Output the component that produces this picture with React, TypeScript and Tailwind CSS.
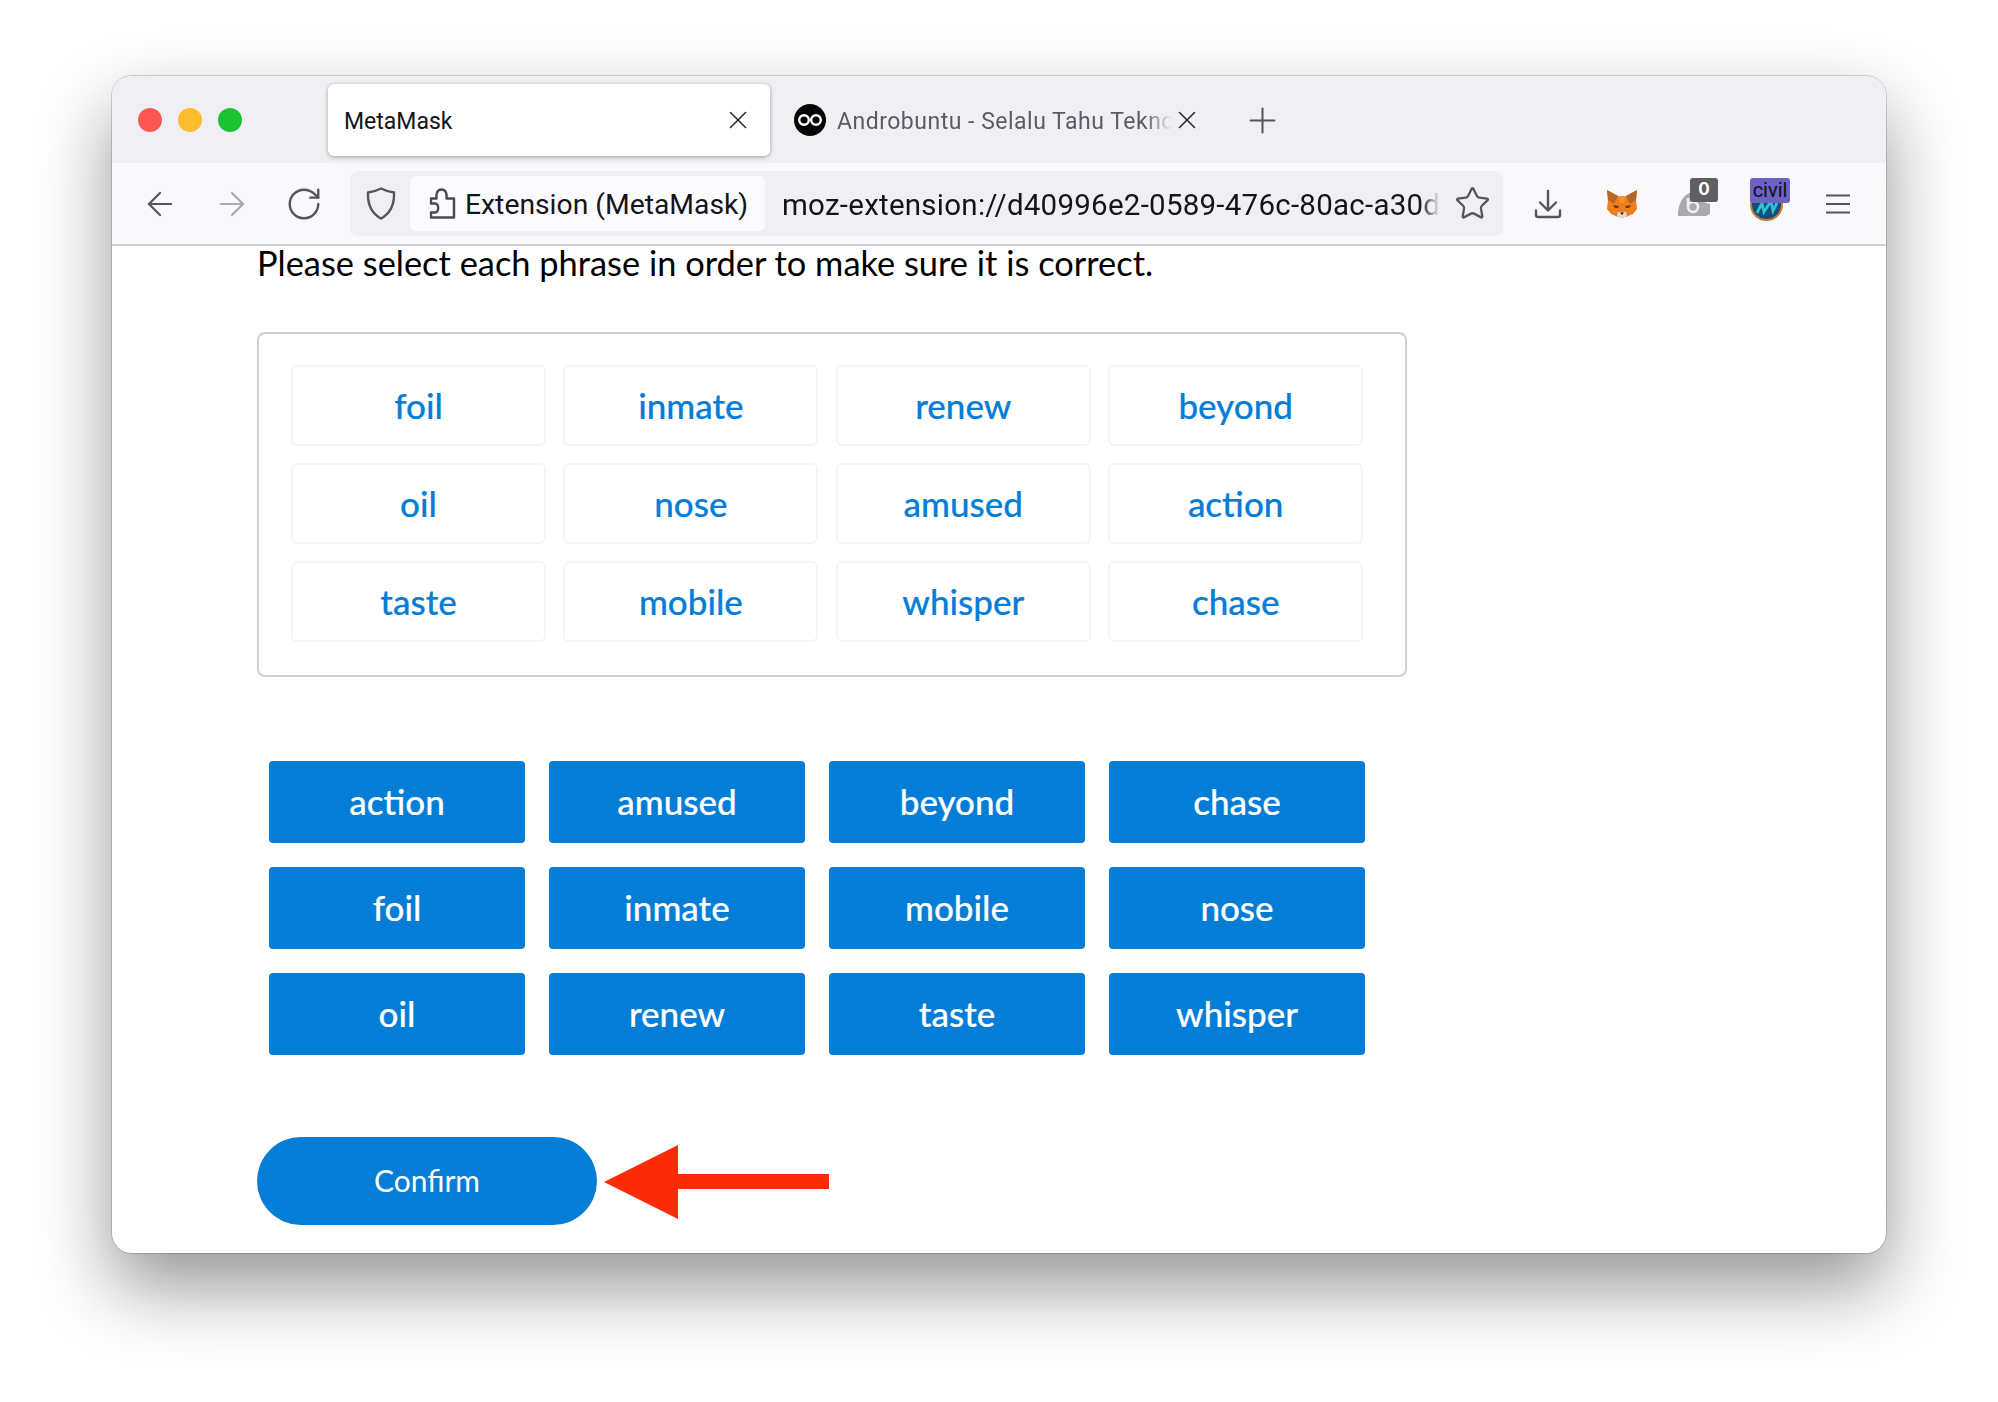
import React from 'react';
import { ArrowLeft, ArrowRight, RotateCw, Star, X, Plus } from 'lucide-react';

const chips = ['foil', 'inmate', 'renew', 'beyond', 'oil', 'nose', 'amused', 'action', 'taste', 'mobile', 'whisper', 'chase'];
const words = ['action', 'amused', 'beyond', 'chase', 'foil', 'inmate', 'mobile', 'nose', 'oil', 'renew', 'taste', 'whisper'];

const PuzzleIcon = () => (
  <svg width="27" height="31" viewBox="0 0 27 31" fill="none" stroke="#4a4a50" strokeWidth="2.4" strokeLinejoin="round">
    <path d="M2 10.500H7.500C7 6 8 1.500 12.500 1.500C17 1.500 18 6 17.500 10.500H25V29.500H2V24.500H6C10 24.500 10.500 15.500 6 15.500H2Z" />
  </svg>
);

const ShieldIcon = () => (
  <svg width="30" height="33" viewBox="0 0 30 33" fill="none" stroke="#55555b" strokeWidth="2.4" strokeLinejoin="round">
    <path d="M15 1.500C19 3.500 23.500 5 28 5.500C28.500 17 25 26 15 31.500C5 26 1.500 17 2 5.500C6.500 5 11 3.500 15 1.500Z" />
  </svg>
);

const FoxIcon = () => (
  <svg width="32" height="30" viewBox="0 0 32 30">
    <polygon points="1,1 12,7 20,7 31,1 30,11 31,20 27,25 20,28 12,28 5,25 1,20 2,11" fill="#ee7f1f" />
    <polygon points="1,1 12,7 8,15 2,11" fill="#b5672a" />
    <polygon points="31,1 20,7 24,15 30,11" fill="#b5672a" />
    <polygon points="12,7 20,7 18,14 14,14" fill="#f6913a" />
    <polygon points="12,23 20,23 21,27 16,30 11,27" fill="#e4d8cc" />
    <polygon points="14,23.500 18,23.500 16,26" fill="#241a12" />
    <polygon points="7,16 13,17 12,19 9,19" fill="#6b3a12" />
    <polygon points="25,16 19,17 20,19 23,19" fill="#6b3a12" />
  </svg>
);

const OwlFavicon = () => (
  <svg width="32" height="32" viewBox="0 0 32 32">
    <circle cx="16" cy="16" r="16" fill="#050505" />
    <circle cx="10" cy="16" r="4.800" fill="none" stroke="#fff" strokeWidth="2.400" />
    <circle cx="22" cy="16" r="4.800" fill="none" stroke="#fff" strokeWidth="2.400" />
  </svg>
);

const DownloadIcon = () => (
  <svg width="28" height="30" viewBox="0 0 28 30" fill="none" stroke="#55555b" strokeWidth="2.400" strokeLinecap="round" strokeLinejoin="round">
    <path d="M14 2v19M6 13.500l8 8 8-8M2 21.500v4.500c0 1.200.8 2 2 2h20c1.200 0 2-.8 2-2v-4.500" />
  </svg>
);

const GreyExtIcon = () => (
  <svg width="32" height="24" viewBox="0 0 32 24">
    <path d="M0 24C0 12 5 1 16 0C18 6 24 10 32 12V22L28 24Z" fill="#a9a9ae" />
    <circle cx="15" cy="15" r="5" fill="none" stroke="#f2f2f4" strokeWidth="2.500" />
    <path d="M10 15V6" stroke="#f2f2f4" strokeWidth="2.500" />
  </svg>
);

const CivilIcon = () => (
  <svg width="33" height="33" viewBox="0 0 33 33">
    <circle cx="16.500" cy="16.500" r="15.500" fill="#11507a" stroke="#c9793a" strokeWidth="2" />
    <path d="M7 25L12 15L14 24L21 13L23 23L27 15" fill="none" stroke="#2cc3d6" strokeWidth="2.800" />
  </svg>
);

const MenuIcon = () => (
  <svg width="24" height="20" viewBox="0 0 24 20" fill="none" stroke="#55555b" strokeWidth="2.200">
    <path d="M0 1.500H24M0 10H24M0 18.500H24" />
  </svg>
);

const App = () => {
  return (
    <div className="min-h-[1402px] bg-white pl-[112px] pt-[76px]" style={{ fontFamily: 'Inter, sans-serif' }}>
      <div className="w-[1774px] h-[1177px] rounded-[20px] bg-white overflow-hidden shadow-[0_34px_75px_rgba(0,0,0,0.42),0_0_0_1px_rgba(0,0,0,0.16)]">
        {/* Tab strip */}
        <div className="h-[87px] bg-[#f0f0f4] flex items-start pt-2">
          <div className="w-[216px] flex items-center gap-[16px] pl-[26px] h-[72px]">
            <span className="w-6 h-6 rounded-full bg-[#fc5753]" />
            <span className="w-6 h-6 rounded-full bg-[#fdbc2e]" />
            <span className="w-6 h-6 rounded-full bg-[#19c332]" />
          </div>
          <div className="w-[442px] h-[72px] bg-white rounded-[6px] shadow-[0_1px_4px_rgba(0,0,0,0.35)] flex items-center justify-between pl-[16px] pr-[17px]">
            <span className="text-[23px] text-[#15141a] font-['Roboto'] mt-[5px]">MetaMask</span>
            <X size={30} strokeWidth={1.3} className="text-[#2b2a33]" />
          </div>
          <div className="h-[72px] flex items-center pl-[24px]">
            <OwlFavicon />
            <span className="ml-[11px] w-[335px] overflow-hidden whitespace-nowrap text-[23px] tracking-[0.5px] text-[#5b5b66] font-['Roboto'] mt-[5px] [mask-image:linear-gradient(to_right,black_92%,transparent)]">Androbuntu - Selalu Tahu Tekno</span>
            <X size={30} strokeWidth={1.3} className="text-[#2b2a33]" />
            <Plus size={41} strokeWidth={1.2} className="ml-[40px] text-[#55555b]" />
          </div>
        </div>

        {/* Toolbar */}
        <div className="h-[83px] bg-[#f9f9fb] border-b-2 border-[#cfcfd8] flex items-center">
          <div className="w-[238px] flex items-center pl-[29px] gap-[34px]">
            <ArrowLeft size={38} strokeWidth={1.4} className="text-[#55555b]" />
            <ArrowRight size={38} strokeWidth={1.4} className="text-[#a9a9ae]" />
            <RotateCw size={38} strokeWidth={1.5} className="text-[#55555b]" />
          </div>
          <div className="w-[1153px] h-[65px] bg-[#f0f0f4] rounded-[8px] flex items-center">
            <div className="w-[60px] flex justify-center pl-[2px]">
              <ShieldIcon />
            </div>
            <div className="w-[355px] h-[55px] bg-[#fbfbfd] rounded-[6px] flex items-center pl-[19px] gap-[9px]">
              <PuzzleIcon />
              <span className="text-[28.3px] text-[#15141a] font-['Roboto'] whitespace-nowrap mt-[3px]">Extension (MetaMask)</span>
            </div>
            <span className="ml-[17px] w-[658px] overflow-hidden whitespace-nowrap text-[29.5px] tracking-[0.25px] text-[#15141a] font-['Roboto'] mt-[3px] [mask-image:linear-gradient(to_right,black_97%,transparent)]">moz-extension://d40996e2-0589-476c-80ac-a30d</span>
            <Star size={37} strokeWidth={1.5} className="ml-[14px] shrink-0 text-[#55555b]" />
          </div>
          <div className="flex items-center flex-1 pl-[31px]">
            <DownloadIcon />
            <div className="ml-[44px]"><FoxIcon /></div>
            <div className="relative ml-[40px] w-[40px] h-[44px]">
              <div className="absolute left-0 top-[10px]"><GreyExtIcon /></div>
              <div className="absolute left-[12px] -top-[4px] w-[28px] h-[24px] rounded-[3px] bg-[#5f5f63] flex items-center justify-center text-white text-[17px] font-bold">0</div>
            </div>
            <div className="relative ml-[32px] w-[40px] h-[44px]">
              <div className="absolute left-0 top-[6px]"><CivilIcon /></div>
              <div className="absolute left-0 -top-[4px] w-[40px] h-[25px] rounded-[3px] bg-[#6b62c4] flex items-center justify-center text-[#10101a] text-[20px] font-['Roboto'] leading-none">civil</div>
            </div>
            <div className="ml-[36px] flex"><MenuIcon /></div>
          </div>
        </div>

        {/* Page content */}
        <div className="pl-[145px] font-['Lato']">
          <p className="text-[34.4px] leading-[36px] text-black -mt-[1px]">Please select each phrase in order to make sure it is correct.</p>

          <div className="mt-[51px] w-[1150px] h-[345px] border-2 border-[#d0d0d0] rounded-[8px] pl-[32px] pt-[31px]">
            <div className="grid grid-cols-[repeat(4,255px)] auto-rows-[81px] gap-x-[17.4px] gap-y-[17px]">
              {chips.map((w) => (
                <div key={w} className="flex items-center justify-center rounded-[6px] border-2 border-[#f2f6fa] text-[35px] font-medium text-[#037dd6] [-webkit-text-stroke:0.2px]">
                  {w}
                </div>
              ))}
            </div>
          </div>

          <div className="mt-[84px] ml-[12px] grid grid-cols-[repeat(4,256px)] auto-rows-[82px] gap-[24px]">
            {words.map((w) => (
              <div key={w} className="flex items-center justify-center rounded-[4px] bg-[#037dd6] text-[35px] font-medium text-white [-webkit-text-stroke:0.2px] pb-[2px]">
                {w}
              </div>
            ))}
          </div>

          <div className="mt-[82px] flex items-center">
            <div className="w-[340px] h-[88px] rounded-full bg-[#037dd6] flex items-center justify-center text-[30px] text-white pb-[2px]">Confirm</div>
            <svg className="ml-[7px] mt-[1px]" width="226" height="76" viewBox="0 0 226 76">
              <polygon points="0,38 74,1 74,30 225,30 225,45 74,45 74,75" fill="#fa2a05" />
            </svg>
          </div>
        </div>
      </div>
    </div>
  );
};

export default App;
